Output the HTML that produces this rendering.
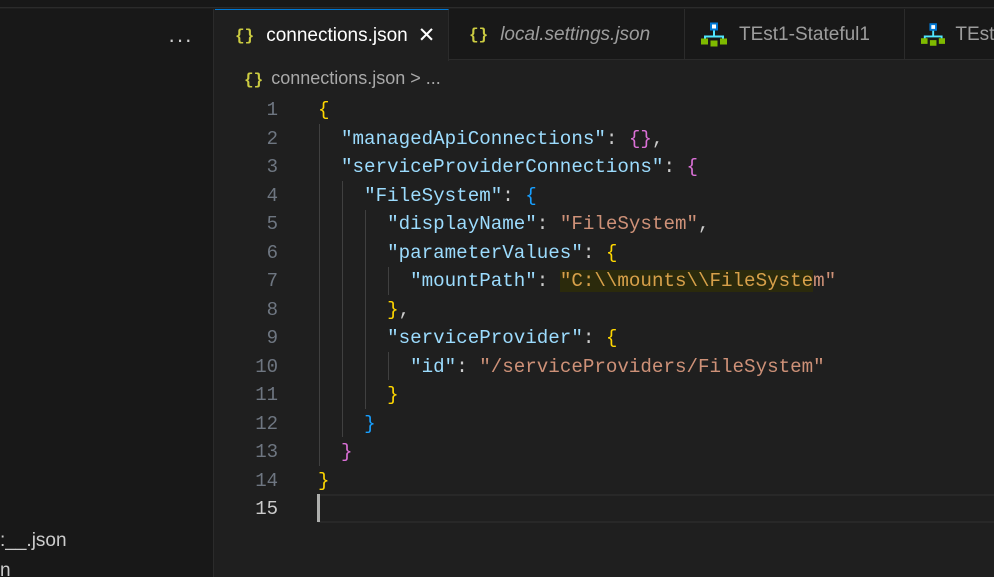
<!DOCTYPE html>
<html><head><meta charset="utf-8"><style>
*{margin:0;padding:0;box-sizing:border-box}
html,body{width:994px;height:577px;overflow:hidden}
body{background:#1f1f1f;position:relative;font-family:"Liberation Sans",sans-serif}
.top{position:absolute;left:0;top:0;width:994px;height:8px;background:#181818;border-bottom:1px solid #2b2b2b}
.side{position:absolute;left:0;top:9px;width:214px;height:568px;background:#181818;border-right:1px solid #2b2b2b}
.dots{position:absolute;left:168px;top:18px;color:#ccc;font-size:22px;letter-spacing:1px}
.tabs{position:absolute;left:215px;top:9px;width:779px;height:51px;background:#181818;border-bottom:1px solid #2b2b2b}
.tab{position:absolute;top:0;height:51px;display:flex;align-items:center;font-size:19px;color:#9d9d9d;border-right:1px solid #2b2b2b;white-space:nowrap;overflow:hidden}
.tab.act{background:#1f1f1f;color:#fff;border-top:1px solid #0078d4;height:52px}
.br{color:#cbcb41;font-family:"Liberation Mono",monospace;font-weight:bold;font-size:16px;margin-right:12px}
.crumb{position:absolute;left:244px;top:68px;font-size:18px;color:#a9a9a9}
.ln{position:absolute;left:228px;width:50px;text-align:right;font-family:"Liberation Mono",monospace;font-size:19px;color:#6e7681;height:28.5px;line-height:28.5px}
.code{position:absolute;left:318px;font-family:"Liberation Mono",monospace;font-size:19.2px;white-space:pre;height:28.5px;line-height:28.5px;color:#ccc}
.k{color:#9cdcfe}.s{color:#ce9178}.y{color:#ffd700}.p{color:#da70d6}.b{color:#179fff}.hs{color:#d7a04a;background:#2b2a0c}
.g{position:absolute;width:1px;background:#404040}
.L{position:absolute;left:0;width:994px;top:0}
</style></head><body>
<div class="top"></div>
<div class="side"><div class="dots">···</div>
<div style="position:absolute;left:0;top:521px;color:#ccc;font-size:19px">:__.json</div>
<div style="position:absolute;left:0;top:551px;color:#ccc;font-size:19px">n</div></div>
<div class="tabs">
<div class="tab act" style="left:0;width:234px;padding-left:20px"><span class="br">{}</span>connections.json<span style="margin-left:10px;font-size:21px">✕</span></div>
<div class="tab" style="left:234px;width:236px;padding-left:20px;font-style:italic"><span class="br" style="font-style:normal">{}</span>local.settings.json</div>
<div class="tab" style="left:470px;width:220px;padding-left:16px"><svg width="26" height="25" viewBox="0 0 26 24" style="margin-right:12px"><rect x="9" y="0" width="8" height="8" fill="#0078d4"/><rect x="11" y="2" width="4" height="4" fill="#fff"/><path d="M13 8v6M4 17v-3h18v3" stroke="#50e6ff" stroke-width="2" fill="none"/><rect x="0" y="16" width="7" height="6" fill="#7fba00"/><rect x="9.5" y="18" width="7" height="6" fill="#7fba00"/><rect x="19" y="16" width="7" height="6" fill="#7fba00"/></svg>TEst1-Stateful1</div>
<div class="tab" style="left:690px;width:100px;padding-left:16px;border:none"><svg width="26" height="25" viewBox="0 0 26 24" style="margin-right:10px"><rect x="9" y="0" width="8" height="8" fill="#0078d4"/><rect x="11" y="2" width="4" height="4" fill="#fff"/><path d="M13 8v6M4 17v-3h18v3" stroke="#50e6ff" stroke-width="2" fill="none"/><rect x="0" y="16" width="7" height="6" fill="#7fba00"/><rect x="9.5" y="18" width="7" height="6" fill="#7fba00"/><rect x="19" y="16" width="7" height="6" fill="#7fba00"/></svg>TEst1</div>
</div>
<div class="crumb"><span class="br" style="margin-right:8px">{}</span>connections.json &gt; ...</div>

<div class="g" style="left:319px;top:124px;height:342px"></div>
<div class="g" style="left:342px;top:181px;height:256px"></div>
<div class="g" style="left:365px;top:210px;height:199px"></div>
<div class="g" style="left:388px;top:267px;height:28px"></div>
<div class="g" style="left:388px;top:352px;height:28px"></div>
<div style="position:absolute;left:318px;top:494px;width:676px;height:29px;border-top:2px solid #282828;border-bottom:2px solid #282828"></div>
<div style="position:absolute;left:317px;top:494px;width:3px;height:28px;background:#aeafad"></div>

<div class="L" style="top:2px">
<div class="ln" style="top:94px">1</div>
<div class="ln" style="top:122.5px">2</div>
<div class="ln" style="top:151px">3</div>
<div class="ln" style="top:179.5px">4</div>
<div class="ln" style="top:208px">5</div>
<div class="ln" style="top:236.5px">6</div>
<div class="ln" style="top:265px">7</div>
<div class="ln" style="top:293.5px">8</div>
<div class="ln" style="top:322px">9</div>
<div class="ln" style="top:350.5px">10</div>
<div class="ln" style="top:379px">11</div>
<div class="ln" style="top:407.5px">12</div>
<div class="ln" style="top:436px">13</div>
<div class="ln" style="top:464.5px">14</div>
<div class="ln" style="top:493px;color:#ccc">15</div>

<div class="code" style="top:94px"><span class="y">{</span></div>
<div class="code" style="top:122.5px">  <span class="k">"managedApiConnections"</span>: <span class="p">{}</span>,</div>
<div class="code" style="top:151px">  <span class="k">"serviceProviderConnections"</span>: <span class="p">{</span></div>
<div class="code" style="top:179.5px">    <span class="k">"FileSystem"</span>: <span class="b">{</span></div>
<div class="code" style="top:208px">      <span class="k">"displayName"</span>: <span class="s">"FileSystem"</span>,</div>
<div class="code" style="top:236.5px">      <span class="k">"parameterValues"</span>: <span class="y">{</span></div>
<div class="code" style="top:265px">        <span class="k">"mountPath"</span>: <span class="hs">"C:\\mounts\\FileSyste</span><span class="s">m"</span></div>
<div class="code" style="top:293.5px">      <span class="y">}</span>,</div>
<div class="code" style="top:322px">      <span class="k">"serviceProvider"</span>: <span class="y">{</span></div>
<div class="code" style="top:350.5px">        <span class="k">"id"</span>: <span class="s">"/serviceProviders/FileSystem"</span></div>
<div class="code" style="top:379px">      <span class="y">}</span></div>
<div class="code" style="top:407.5px">    <span class="b">}</span></div>
<div class="code" style="top:436px">  <span class="p">}</span></div>
<div class="code" style="top:464.5px"><span class="y">}</span></div>
</div>
</body></html>
